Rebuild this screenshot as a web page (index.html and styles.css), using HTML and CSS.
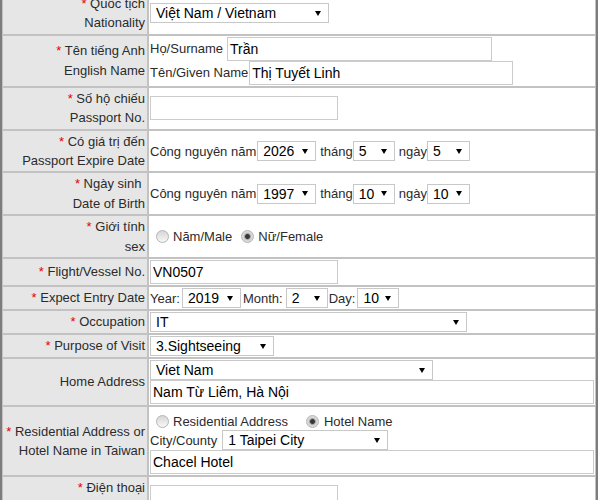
FILE: index.html
```html
<!DOCTYPE html>
<html lang="vi">
<head>
<meta charset="utf-8">
<title>Arrival Card</title>
<link rel="stylesheet" href="styles.css">
</head>
<body>
<div class="form">
  <div class="lbl"><div><span class="req">*</span> Quốc tịch<br>Nationality</div></div>
  <div class="val"><select class="sel w-nat"><option>Việt Nam / Vietnam</option></select></div>

  <div class="lbl"><div><span class="req">*</span> Tên tiếng Anh<br>English Name</div></div>
  <div class="val">
    <div class="line"><span>Họ/Surname</span><input class="inp w-sur ml4" type="text" value="Trần"></div>
    <div class="line"><span>Tên/Given Name</span><input class="inp w-giv ml1" type="text" value="Thị Tuyết Linh"></div>
  </div>

  <div class="lbl"><div><span class="req">*</span> Số hộ chiếu<br>Passport No.</div></div>
  <div class="val"><input class="inp w-short" type="text" value=""></div>

  <div class="lbl"><div><span class="req">*</span> Có giá trị đến<br>Passport Expire Date</div></div>
  <div class="val">
    <div class="line">
      <span>Công nguyên năm</span><select class="sel w-year ml1"><option>2026</option></select>
      <span class="ml4">tháng</span><select class="sel w-md"><option>5</option></select>
      <span class="ml4">ngày</span><select class="sel w-md2"><option>5</option></select>
    </div>
  </div>

  <div class="lbl"><div><span class="req">*</span> Ngày sinh&nbsp;<br>Date of Birth</div></div>
  <div class="val">
    <div class="line">
      <span>Công nguyên năm</span><select class="sel w-year ml1"><option>1997</option></select>
      <span class="ml4">tháng</span><select class="sel w-md"><option>10</option></select>
      <span class="ml4">ngày</span><select class="sel w-md2"><option>10</option></select>
    </div>
  </div>

  <div class="lbl"><div><span class="req">*</span> Giới tính<br>sex</div></div>
  <div class="val">
    <div class="line">
      <input class="radio ml6" type="radio" name="sex"><span class="ml4">Năm/Male</span>
      <input class="radio ml9" type="radio" name="sex" checked><span class="ml4">Nữ/Female</span>
    </div>
  </div>

  <div class="lbl"><div><span class="req">*</span> Flight/Vessel No.</div></div>
  <div class="val"><input class="inp w-short" type="text" value="VN0507"></div>

  <div class="lbl"><div><span class="req">*</span> Expect Entry Date</div></div>
  <div class="val">
    <div class="line">
      <span>Year:</span><select class="sel w-year2 ml2"><option>2019</option></select>
      <span class="ml2">Month:</span><select class="sel w-md ml3"><option>2</option></select>
      <span class="ml1">Day:</span><select class="sel w-md ml2"><option>10</option></select>
    </div>
  </div>

  <div class="lbl"><div><span class="req">*</span> Occupation</div></div>
  <div class="val"><select class="sel w-occ"><option>IT</option></select></div>

  <div class="lbl"><div><span class="req">*</span> Purpose of Visit</div></div>
  <div class="val"><select class="sel w-pur"><option>3.Sightseeing</option></select></div>

  <div class="lbl"><div>Home Address</div></div>
  <div class="val">
    <select class="sel w-home"><option>Viet Nam</option></select>
    <input class="inp w-full" type="text" value="Nam Từ Liêm, Hà Nội">
  </div>

  <div class="lbl"><div><span class="req">*</span> Residential Address or<br>Hotel Name in Taiwan</div></div>
  <div class="val">
    <div class="line radios">
      <input class="radio ml6" type="radio" name="res"><span class="ml4">Residential Address</span>
      <input class="radio ml18" type="radio" name="res" checked><span class="ml5">Hotel Name</span>
    </div>
    <div class="line"><span>City/County</span><select class="sel w-city ml5"><option>1 Taipei City</option></select></div>
    <input class="inp w-full" type="text" value="Chacel Hotel">
  </div>

  <div class="lbl"><div><span class="req">*</span> Điện thoại<br>&nbsp;</div></div>
  <div class="val"><input class="inp w-short" type="text" value=""></div>
</div>
</body>
</html>
```

FILE: styles.css
```css
html, body {
  margin: 0;
  padding: 0;
  background: #fff;
}

body {
  font-family: "Liberation Sans", Arial, sans-serif;
  font-size: 13px;
  color: #2b2b2b;
}

.form {
  display: grid;
  grid-template-columns: 146px 448px;
  width: 594px;
  border-left: 2px solid #7d7d7d;
  border-right: 2px solid #7d7d7d;
  margin-top: -8px;
}

.lbl,
.val {
  box-sizing: border-box;
  border: 1px solid #c2c2c2;
  padding: 1px;
}

.lbl {
  background: #e6e6e6;
  display: flex;
  align-items: center;
  justify-content: flex-end;
  text-align: right;
  padding-right: 2px;
  line-height: 19.4px;
  white-space: nowrap;
}

.val {
  display: flex;
  flex-direction: column;
  justify-content: center;
  align-items: flex-start;
  line-height: 19px;
  white-space: nowrap;
}

.line {
  display: flex;
  align-items: center;
}

.radios {
  box-sizing: border-box;
  height: 22px;
  padding-top: 4px;
}

.req {
  color: #e60000;
}

.sel {
  -webkit-appearance: none;
  appearance: none;
  box-sizing: border-box;
  height: 20px;
  margin: 0;
  padding: 0 0 0 5px;
  border: 1px solid #c8c8c8;
  border-radius: 0;
  background: #fff url("data:image/svg+xml,%3Csvg xmlns='http://www.w3.org/2000/svg' width='6' height='5'%3E%3Cpath d='M0 0H6L3 5z' fill='%23000'/%3E%3C/svg%3E") no-repeat right 7px center;
  font: 14px "Liberation Sans", Arial, sans-serif;
  color: #000;
}

.inp {
  box-sizing: border-box;
  height: 24px;
  margin: 0;
  padding: 0 2px;
  border: 1px solid #cbcbcb;
  border-radius: 0;
  background: #fff;
  font: 14px "Liberation Sans", Arial, sans-serif;
  color: #000;
}

.radio {
  -webkit-appearance: none;
  appearance: none;
  box-sizing: border-box;
  width: 13px;
  height: 13px;
  margin-top: 0;
  margin-bottom: 0;
  margin-right: 0;
  border: 1px solid #b4b4b4;
  border-radius: 50%;
  background: linear-gradient(#d6d6d6, #f7f7f7);
}

.radio:checked {
  background: radial-gradient(circle at 50% 50%, #333 0, #3a3a3a 2px, #9c9c9c 2.8px, #d2d2d2 3.8px, #ececec 100%);
}

.w-nat { width: 179px; }
.w-sur { width: 265px; }
.w-giv { width: 264px; }
.w-short { width: 188px; }
.w-year { width: 59px; }
.w-year2 { width: 59px; }
.w-md { width: 42px; }
.w-md2 { width: 43px; }
.w-occ { width: 317px; }
.w-pur { width: 124px; }
.w-home { width: 283px; }
.w-city { width: 166px; }
.w-full { width: 100%; }

.ml1 { margin-left: 1px; }
.ml2 { margin-left: 2px; }
.ml3 { margin-left: 3px; }
.ml4 { margin-left: 4px; }
.ml5 { margin-left: 5px; }
.ml6 { margin-left: 6px; }
.ml9 { margin-left: 9px; }
.ml18 { margin-left: 18px; }
```
